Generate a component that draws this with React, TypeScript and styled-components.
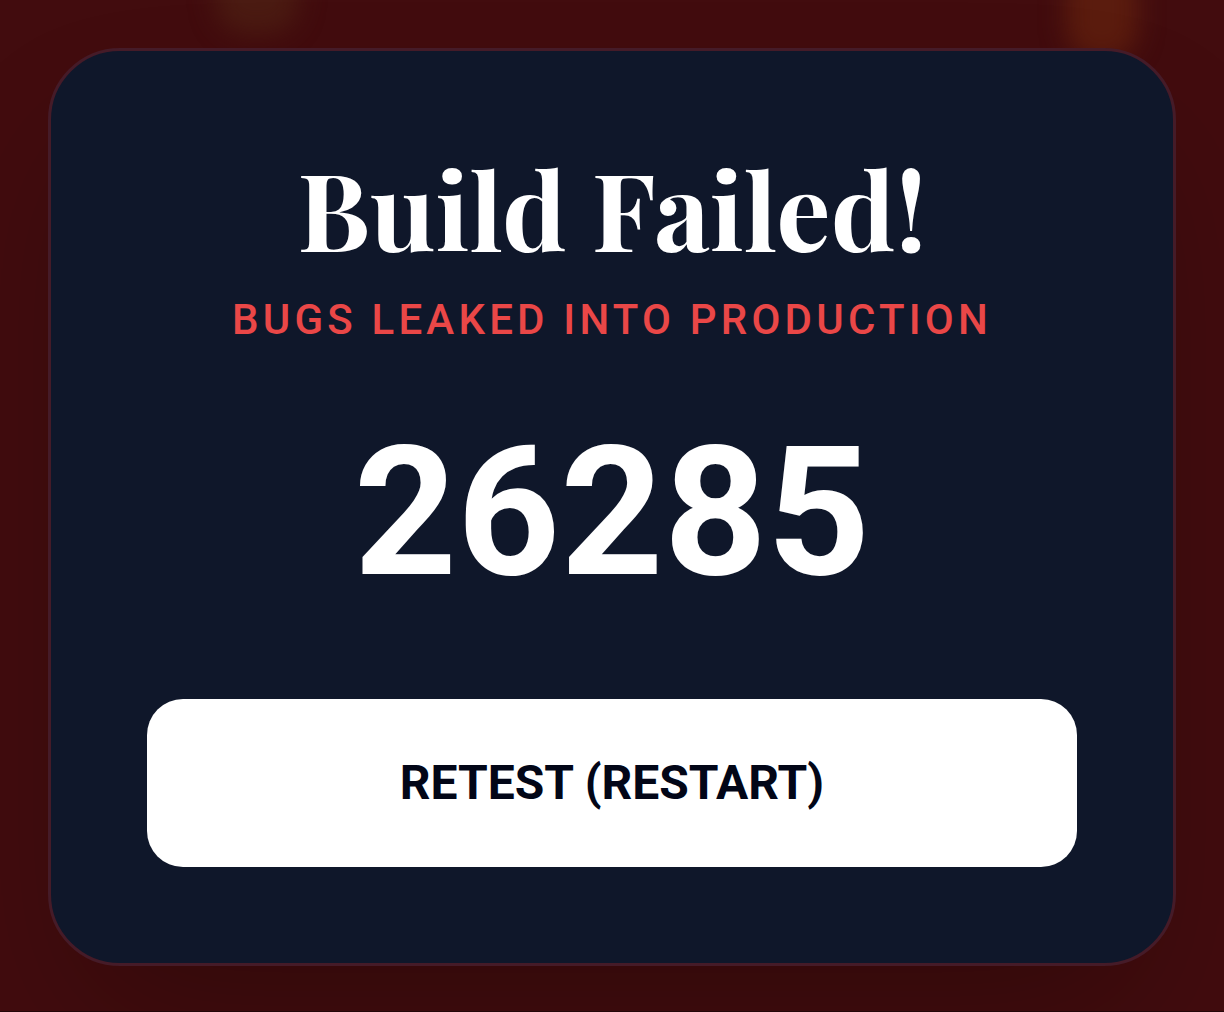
import React, { useState } from "react";
import styled, { createGlobalStyle } from "styled-components";

const GlobalStyle = createGlobalStyle`
  * { box-sizing: border-box; }
  body { margin: 0; background: #400c0e; }
`;

const Screen = styled.main`
  position: relative;
  isolation: isolate;
  overflow: hidden;
  display: flex;
  align-items: flex-start;
  justify-content: center;
  min-height: 100vh;
  padding: 48px 48px 44px;
  border-bottom: 1px solid #240608;
  background: #420c0e;
  font-family: Roboto, "Liberation Sans", sans-serif;
`;

const Glow = styled.span<{ $left: string; $color: string; $width: number; $height: number }>`
  position: absolute;
  z-index: -1;
  top: -40px;
  left: ${(p) => p.$left};
  width: ${(p) => p.$width}px;
  height: ${(p) => p.$height}px;
  border-radius: 32px;
  transform: translateX(-50%);
  background: ${(p) => p.$color};
  filter: blur(12px);
`;

const Card = styled.section`
  width: 100%;
  padding: 96px;
  border: 3px solid #451b28;
  border-radius: 72px;
  background: #0f172a;
  box-shadow: 0 75px 150px -36px rgba(0, 0, 0, 0.25);
  text-align: center;
`;

const Title = styled.h1`
  margin: 0 0 24px;
  color: #fff;
  font-family: "Playfair Display", "Liberation Serif", serif;
  font-size: 108px;
  font-weight: 700;
  line-height: 120px;
`;

const Subtitle = styled.p`
  margin: 0 0 74px;
  color: #ea4747;
  font-size: 42px;
  font-weight: 500;
  line-height: 58px;
  letter-spacing: 0.1em;
  text-transform: uppercase;
`;

const Score = styled.output`
  display: block;
  margin: 0 0 96px;
  color: #fff;
  font-size: 180px;
  font-weight: 700;
  line-height: 180px;
`;

const RestartButton = styled.button`
  display: block;
  width: 100%;
  padding: 48px;
  border: 0;
  border-radius: 36px;
  background: #fff;
  color: #020617;
  font-family: inherit;
  font-size: 48px;
  font-weight: 700;
  line-height: 72px;
  cursor: pointer;
`;

export default function App() {
  const [score, setScore] = useState(26285);

  return (
    <>
      <GlobalStyle />
      <Screen>
        <Glow $left="21%" $color="#4b1b12" $width={84} $height={74} />
        <Glow $left="90%" $color="#5b1c0e" $width={72} $height={100} />
        <Card>
          <Title>Build Failed!</Title>
          <Subtitle>Bugs leaked into production</Subtitle>
          <Score>{score}</Score>
          <RestartButton type="button" onClick={() => setScore(0)}>
            RETEST (RESTART)
          </RestartButton>
        </Card>
      </Screen>
    </>
  );
}
